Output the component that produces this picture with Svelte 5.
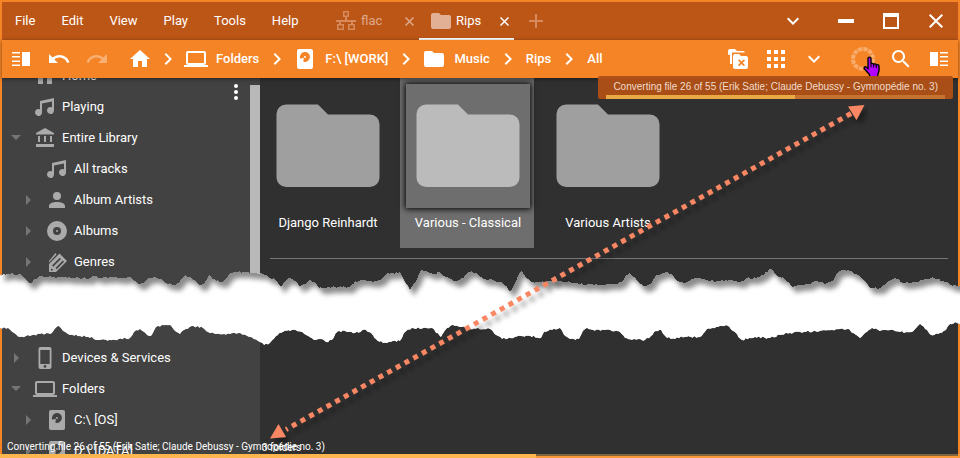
<script>
  const menus = ['File', 'Edit', 'View', 'Play', 'Tools', 'Help'];

  const icons = {
    home: 'M10 20v-6h4v6h5v-8h3L12 3 2 12h3v8z',
    undo: 'M12.5 8c-2.65 0-5.05.99-6.9 2.6L2 7v9h9l-3.62-3.62c1.39-1.16 3.16-1.88 5.12-1.88 3.54 0 6.55 2.31 7.6 5.5l2.37-.78C21.08 11.03 17.15 8 12.5 8z',
    redo: 'M18.4 10.6C16.55 8.99 14.15 8 11.5 8c-4.65 0-8.58 3.03-9.96 7.22L3.9 16c1.05-3.19 4.05-5.5 7.6-5.5 1.95 0 3.73.72 5.12 1.88L13 16h9V7l-3.6 3.6z',
    laptop: 'M20 18c1.1 0 2-.9 2-2V6c0-1.1-.9-2-2-2H4c-1.1 0-2 .9-2 2v10c0 1.1.9 2 2 2H0v2h24v-2zM4 6h16v10H4z',
    drive: 'M6 2h12a2 2 0 0 1 2 2v16a2 2 0 0 1-2 2H6a2 2 0 0 1-2-2V4a2 2 0 0 1 2-2zM10.800 10.800L7.300 11.800A5 5 0 1 1 10.400 14.700zM12 9a1 1 0 1 0 0 2 1 1 0 0 0 0-2z',
    folder: 'M10 4H4c-1.110 0-2 .89-2 2v12a2 2 0 0 0 2 2h16a2 2 0 0 0 2-2V8c0-1.110-.9-2-2-2h-8z',
    music: 'M21 3v12.500a3.500 3.500 0 1 1-2-3.160V6.470L9 8.600v8.900A3.500 3.500 0 1 1 7 14.340V6z',
    library: 'M3 8.500V7l9-5 9 5v1.500zM5 10h2v6H5zM11 10h2v6h-2zM17 10h2v6h-2zM3 18h18v3H3z',
    person: 'M12 4a4 4 0 1 1 0 8 4 4 0 0 1 0-8zM4 20v-2c0-2.660 4-4 8-4s8 1.340 8 4v2z',
    disc: 'M12 2a10 10 0 1 0 0 20 10 10 0 0 0 0-20zm0 6a4 4 0 1 1 0 8 4 4 0 0 1 0-8zm0 3a1 1 0 1 0 0 2 1 1 0 0 0 0-2z',
    genres: 'M4 22V14L14.500 3.500 22 11 11 22zM5.800 19.800a1 1 0 1 0 2 0 1 1 0 0 0-2 0zM7 15.500l1.200 1.200L16 9l-1.200-1.200zM10.500 18l1.200 1.200 7.300-7.500-1.200-1.200zM4 11L10.500 3l1 1.500L4 12.500z',
    phone: 'M7.500 1h9A2 2 0 0 1 18.500 3v18a2 2 0 0 1-2 2h-9a2 2 0 0 1-2-2V3a2 2 0 0 1 2-2zM7.300 4v14h9.400V4zM12 19a1.400 1.400 0 1 0 0 2.800 1.400 1.400 0 0 0 0-2.800z',
    chevron: 'M8.590 16.580L13.170 12 8.590 7.410 10 6l6 6-6 6z',
    down: 'M7.410 8.590L12 13.170l4.590-4.580L18 10l-6 6-6-6z',
    search: 'M9.500 3A6.500 6.500 0 0 1 14.440 13.730l.27.27h.79l5 5-1.500 1.500-5-5v-.79l-.27-.27A6.500 6.500 0 1 1 9.500 3zm0 2a4.500 4.500 0 1 0 0 9 4.500 4.500 0 0 0 0-9z',
    grid: 'M3 3h4v4H3zM10 3h4v4h-4zM17 3h4v4h-4zM3 10h4v4H3zM10 10h4v4h-4zM17 10h4v4h-4zM3 17h4v4H3zM10 17h4v4h-4zM17 17h4v4h-4z',
    panelLeft: 'M3 5h8v1.500H3zM3 9h8v1.500H3zM3 13.500h8V15H3zM3 17.500h8V19H3zM13 5h8v14h-8z',
    panelRight: 'M3 5h8v14H3zM13 5h8v1.500h-8zM13 9h8v1.500h-8zM13 13.500h8V15h-8zM13 17.500h8V19h-8z',
    network: 'M9 2h6v6h-2v3h9v2h-3v2h2v6h-7v-6h3v-2H7v2h3v6H3v-6h2v-2H2v-2h9V8H9zM10.500 3.500v3h3v-3zM4.500 16.500v3h4v-3zM15.500 16.500v3h4v-3z',
    closeFolder: 'M4 2h5l2 2h6a2 2 0 0 1 2 1.500H6V17H4V8L2 7.500V4a2 2 0 0 1 2-2zM9 7h4l2 2h5a2 2 0 0 1 2 2v9a2 2 0 0 1-2 2H9a2 2 0 0 1-2-2V9a2 2 0 0 1 2-2zM13.200 12.200L12 13.400l2.300 2.300L12 18l1.200 1.200 2.300-2.300 2.300 2.300L19 18l-2.300-2.300 2.300-2.300-1.200-1.200-2.300 2.300z'
  };

  const crumbs = [
    { label: '', icon: 'home' },
    { label: 'Folders', icon: 'laptop' },
    { label: 'F:\\ [WORK]', icon: 'drive' },
    { label: 'Music', icon: 'folder' },
    { label: 'Rips', icon: '' },
    { label: 'All', icon: '' }
  ];

  const library = [
    { label: 'Home', icon: 'home', level: 0 },
    { label: 'Playing', icon: 'music', level: 0 },
    { label: 'Entire Library', icon: 'library', level: 0, caret: 'open' },
    { label: 'All tracks', icon: 'music', level: 1 },
    { label: 'Album Artists', icon: 'person', level: 1, caret: 'closed' },
    { label: 'Albums', icon: 'disc', level: 1, caret: 'closed' },
    { label: 'Genres', icon: 'genres', level: 1, caret: 'closed' }
  ];
  const places = [
    { label: 'Devices & Services', icon: 'phone', level: 0, caret: 'closed' },
    { label: 'Folders', icon: 'laptop', level: 0, caret: 'open' },
    { label: 'C:\\ [OS]', icon: 'drive', level: 1, caret: 'closed' },
    { label: 'D:\\ [DATA]', icon: 'drive', level: 1, caret: 'closed' }
  ];

  const albums = [
    { name: 'Django Reinhardt' },
    { name: 'Various - Classical', selected: true },
    { name: 'Various Artists' }
  ];

  const message = 'Converting file 26 of 55 (Erik Satie; Claude Debussy - Gymnopédie no. 3)';

  // Outline of the torn strip, as x,y pairs measured from the strip's top.
  const upper = '0,10 7,9 12,8 15,10 20,9 23,12 28,17 32,18 35,14 41,11 48,12 60,12 75,13 90,13 95,11 100,13 110,12 120,13 130,12 137,18 143,18 148,13 155,12 163,15 168,19 173,20 178,18 184,11 189,12 194,15 200,20 204,19 209,10 214,14 220,17 224,16 229,9 234,7 245,7 256,8 263,9 270,13 275,14 281,22 285,16 290,13 296,16 300,22 304,19 309,15 314,17 319,23 332,22 342,22 350,22 355,16 365,15 375,16 380,15 386,9 393,8 400,7 403,13 410,25 416,16 421,5 428,7 433,9 440,7 446,12 454,16 460,15 467,9 472,6 478,10 485,14 495,16 503,18 510,26 513,22 518,11 521,6 525,11 532,17 540,17 550,16 560,16 570,17 580,19 600,20 610,19 622,17 626,10 630,8 634,12 640,19 645,21 651,19 656,10 661,9 666,7 672,9 676,15 684,18 693,14 700,13 710,16 720,16 730,15 740,17 747,13 756,13 764,10 769,4 773,5 777,11 785,14 793,22 800,20 810,19 817,16 825,19 833,16 837,8 843,5 850,6 859,10 864,15 870,23 880,23 887,17 895,13 903,18 915,17 925,14 934,13 943,16 951,20 960,21';
  const lower = '0,63 8,63 14,68 20,72 30,71 40,69 50,69 54,65 59,61 63,66 70,70 80,71 88,72 100,75 115,75 130,73 134,67 140,64 147,70 151,71 156,62 162,60 170,60 174,65 180,69 186,64 192,61 203,63 208,67 216,69 230,69 240,68 250,72 258,76 264,80 270,78 276,71 283,67 292,65 302,67 308,71 314,75 320,74 326,77 332,75 337,67 345,66 355,68 366,65 371,68 376,74 383,78 393,76 400,76 404,68 412,63 432,63 436,68 441,72 447,63 453,60 462,62 470,64 490,64 496,70 502,74 515,72 530,71 541,73 544,67 552,65 560,63 564,70 570,74 579,74 583,66 587,63 593,65 610,65 620,67 625,73 632,75 640,74 645,75 651,71 656,66 661,65 665,71 671,74 685,72 700,72 707,64 718,62 728,61 733,66 742,75 755,72 770,73 780,70 790,68 800,67 820,66 848,64 853,68 860,73 867,67 872,63 878,65 890,65 900,67 912,67 917,62 920,59 925,64 931,70 940,68 946,65 950,59 957,58 960,59';

  // Breaks each straight run into short steps so that the paper looks fibrous.
  function roughen(source) {
    const pts = source.split(' ').map((p) => p.split(',').map(Number));
    const out = [];
    let seed = 7;
    for (let i = 0; i < pts.length - 1; i++) {
      const [x1, y1] = pts[i];
      const [x2, y2] = pts[i + 1];
      const steps = Math.max(1, Math.round((x2 - x1) / 2));
      for (let s = 0; s < steps; s++) {
        seed = (seed * 1103 + 541) % 7919;
        const jitter = s === 0 ? 0 : (seed / 7919 - 0.5) * 2;
        out.push([x1 + ((x2 - x1) * s) / steps, y1 + ((y2 - y1) * s) / steps + jitter]);
      }
    }
    out.push(pts[pts.length - 1]);
    return out;
  }
  const top = roughen(upper);
  const bottom = roughen(lower).reverse();
  const tear = [...top, ...bottom].map((p) => p.join(',')).join(' ');
  const paper = [[-30, 0], [2, 0], ...top, [1000, 21], [1000, 120], [-30, 120]].map((p) => p.join(',')).join(' ');
</script>

{#snippet icon(name)}
  <svg class="icon" viewBox="0 0 24 24" aria-hidden="true"><path fill-rule="evenodd" d={icons[name]} /></svg>
{/snippet}

{#snippet tree(rows)}
  <ul>
    {#each rows as row}
      <li>
        <a href="#item" class:nested={row.level === 1}>
          <span class="caret">
            {#if row.caret === 'open'}
              <svg width="10" height="5" viewBox="0 0 10 5"><path d="M0 0h10L5 5z" /></svg>
            {:else if row.caret === 'closed'}
              <svg width="5" height="10" viewBox="0 0 5 10"><path d="M0 0v10l5-5z" /></svg>
            {/if}
          </span>
          {@render icon(row.icon)}
          <span>{row.label}</span>
        </a>
      </li>
    {/each}
  </ul>
{/snippet}

<div class="app">
  <header class="titlebar">
    <nav class="menus">
      {#each menus as m}<button>{m}</button>{/each}
    </nav>
    <div class="tabs">
      <div class="tab">
        {@render icon('network')}
        <a href="#flac">flac</a>
        <button class="close" aria-label="Close flac"><svg width="9" height="9" viewBox="0 0 9 9"><path d="M.5.5l8 8M8.500.5l-8 8" /></svg></button>
      </div>
      <div class="tab active">
        {@render icon('folder')}
        <a href="#rips">Rips</a>
        <button class="close" aria-label="Close Rips"><svg width="9" height="9" viewBox="0 0 9 9"><path d="M.5.5l8 8M8.500.5l-8 8" /></svg></button>
      </div>
      <button class="add" aria-label="New tab"><svg width="14" height="14" viewBox="0 0 14 14"><path d="M7 0v14M0 7h14" /></svg></button>
    </div>
    <div class="window">
      <button aria-label="More tabs">{@render icon('down')}</button>
      <button aria-label="Minimize"><svg width="16" height="16" viewBox="0 0 16 16"><path d="M0 6h16v4H0z" /></svg></button>
      <button aria-label="Maximize"><svg width="16" height="16" viewBox="0 0 16 16"><path fill-rule="evenodd" d="M0 0h16v16H0zM2 4v10h12V4z" /></svg></button>
      <button aria-label="Close"><svg width="14" height="14" viewBox="0 0 14 14"><path d="M.7.7l12.600 12.600M13.300.7L.7 13.300" fill="none" stroke="#fff" stroke-width="2" /></svg></button>
    </div>
  </header>

  <div class="toolbar">
    <div class="history">
      <button aria-label="Toggle navigation panel">{@render icon('panelLeft')}</button>
      <button aria-label="Back">{@render icon('undo')}</button>
      <button aria-label="Forward" class="off">{@render icon('redo')}</button>
    </div>
    <nav class="crumbs" aria-label="Breadcrumb">
      {#each crumbs as c, i}
        {#if i > 0}{@render icon('chevron')}{/if}
        <a href="#crumb" aria-label={c.label || 'Home'}>
          {#if c.icon}{@render icon(c.icon)}{/if}
          {#if c.label}<span>{c.label}</span>{/if}
        </a>
      {/each}
    </nav>
    <div class="tools">
      <button aria-label="Close folder">{@render icon('closeFolder')}</button>
      <button aria-label="Grid view">{@render icon('grid')}</button>
      <button aria-label="View options">{@render icon('down')}</button>
      <button aria-label="Running tasks" class="task">
        <svg width="24" height="24" viewBox="0 0 24 24"><circle cx="12" cy="12" r="10" fill="none" stroke="#fff" stroke-opacity=".32" stroke-width="4" stroke-dasharray="4.240 1" /></svg>
        <svg class="cursor" width="18" height="23" viewBox="0 0 18 23">
          <path d="M5 2.500C5 .6 8 .6 8 2.500V8c.5-1 2.500-.8 2.700.4.600-.9 2.400-.6 2.600.6.600-.7 2.700-.4 2.700 1.200v4.300c0 1.500-1 2.500-1.200 4V21H6.500v-2.500L1.500 13c-1-1.300.3-2.800 1.700-2l1.800 1.500z" fill="#b400ff" stroke="#000" stroke-width="1.400" />
          <path d="M10.700 8.500v3M13.300 9.500v2.500M8 8v3.500" stroke="#000" fill="none" />
        </svg>
      </button>
      <button aria-label="Search">{@render icon('search')}</button>
      <button aria-label="Toggle details panel">{@render icon('panelRight')}</button>
    </div>
    <div class="toast" role="status">
      <span>{message}</span>
      <div class="meter"><div style:width="{(189 / 339) * 100}%"></div></div>
    </div>
  </div>

  <div class="body">
    <aside>
      {@render tree(library)}
      {@render tree(places)}
      <button class="kebab" aria-label="Panel options"><svg width="4" height="16" viewBox="0 0 4 16"><circle cx="2" cy="2" r="2" /><circle cx="2" cy="8" r="2" /><circle cx="2" cy="14" r="2" /></svg></button>
      <div class="scrollbar"></div>
    </aside>
    <main>
      <div class="gallery">
        {#each albums as a}
          <a href="#album" class="card" class:selected={a.selected}>
            <span class="thumb">
              <svg width="104" height="84" viewBox="0 0 104 84"><path d="M10 .5H42L52 10.500H94A9.500 9.500 0 0 1 103.500 20V73A9.500 9.500 0 0 1 94 83H10A9.500 9.500 0 0 1 .5 73V10A9.500 9.500 0 0 1 10 .5z" /></svg>
            </span>
            <span class="name">{a.name}</span>
          </a>
        {/each}
      </div>
      <hr />
    </main>

    <svg class="tear" viewBox="0 0 960 82" preserveAspectRatio="none" aria-hidden="true">
      <defs>
        <clipPath id="strip"><polygon points={tear} /></clipPath>
        <filter id="soft" x="-5%" y="-20%" width="110%" height="140%"><feGaussianBlur stdDeviation="2.400" /></filter>
      </defs>
      <polygon points={tear} fill="#8c8c8c" shape-rendering="crispEdges" />
      <g clip-path="url(#strip)"><polygon points={paper} fill="#fff" filter="url(#soft)" transform="translate(4 6)" /></g>
    </svg>
    <svg class="arrow" viewBox="0 0 600 340" aria-hidden="true">
      <defs>
        <filter id="shade" x="-5%" y="-5%" width="110%" height="115%"><feDropShadow dx="4" dy="5" stdDeviation="2.500" flood-color="#000" flood-opacity=".4" /></filter>
      </defs>
      <g filter="url(#shade)" fill="#fa8763">
        <path d="M582 10.500L17 326.500" stroke="#fa8763" stroke-width="5" stroke-dasharray="5 4.930" />
        <path d="M595.500 2L579 3.500 587.500 17zM1 335.500L9.500 321 17 334z" />
      </g>
    </svg>
  </div>

  <footer>
    <span class="count">3 folders</span>
    <span class="message">{message}</span>
    <div class="progress"><div style:width="{(536 / 960) * 100}%"></div></div>
  </footer>
</div>

<style>
  :global(body) {
    margin: 0;
    background: #303030;
  }
  .app {
    position: relative;
    display: flex;
    flex-direction: column;
    height: 100vh;
    box-sizing: border-box;
    border: 2px solid #f58426;
    color: #fff;
    font: 13px/18px Roboto, 'Liberation Sans', sans-serif;
  }
  button {
    padding: 0;
    border: 0;
    background: none;
    color: inherit;
    font: inherit;
  }
  a {
    color: inherit;
    text-decoration: none;
  }
  svg {
    display: block;
    flex: none;
    fill: currentColor;
  }
  .icon {
    width: 24px;
    height: 24px;
  }

  .titlebar {
    display: flex;
    flex: none;
    height: 38px;
    background: #bc5617;
  }
  .menus {
    display: flex;
    gap: 26px;
    width: 309px;
    padding-left: 13px;
    box-sizing: border-box;
  }
  .tabs {
    display: flex;
    flex: 1;
    padding-left: 13px;
  }
  .tab {
    display: flex;
    align-items: center;
    gap: 3px;
    width: 95px;
    padding: 0 4px 0 10px;
    box-sizing: border-box;
    color: #dda98a;
  }
  .tab a {
    flex: 1;
  }
  .tab .icon {
    color: #d68a5d;
  }
  .tab.active {
    color: #fff;
    box-shadow: inset 0 -2px #fff;
  }
  .tab.active .icon {
    color: #e2b094;
  }
  .close {
    display: flex;
    justify-content: center;
    width: 12px;
  }
  .close svg,
  .add svg {
    fill: none;
    stroke: currentColor;
    stroke-width: 1.500;
  }
  .add {
    width: 44px;
    display: flex;
    align-items: center;
    justify-content: center;
    color: #d68a5d;
  }
  .add svg {
    stroke-width: 2;
  }
  .window {
    display: flex;
  }
  .window button {
    display: flex;
    align-items: center;
    justify-content: center;
    width: 45px;
  }
  .window button:first-child {
    width: 60px;
  }

  .toolbar {
    position: relative;
    z-index: 2;
    display: flex;
    align-items: center;
    flex: none;
    height: 38px;
    padding: 0 7px;
    background: #f58426;
    box-shadow: 0 1px 4px rgba(0, 0, 0, 0.5);
  }
  .history {
    display: flex;
    gap: 14px;
    margin-right: 15px;
  }
  .off {
    opacity: 0.35;
  }
  .crumbs {
    display: flex;
    align-items: center;
    flex: 1;
    font-weight: 500;
  }
  .crumbs a {
    display: flex;
    align-items: center;
    gap: 6px;
    padding: 0 4px;
  }
  .crumbs span {
    padding: 0 2px;
  }
  .tools {
    display: flex;
    gap: 14px;
  }
  .task {
    position: relative;
    margin: 0 0 0 11px;
  }
  .cursor {
    position: absolute;
    left: 12px;
    top: 9px;
  }
  .toast {
    position: absolute;
    right: 5px;
    top: 36px;
    padding: 3px 8px 0;
    border-radius: 2px;
    background: rgba(172, 80, 22, 0.97);
    color: #f2dccd;
    font-family: 'Liberation Sans', sans-serif;
    font-size: 10px;
    line-height: 16px;
  }
  .toast span {
    padding: 0 7px;
  }
  .meter {
    height: 4px;
    background: #c6732f;
  }
  .meter div {
    height: 4px;
    background: #eba946;
  }

  .body {
    position: relative;
    display: flex;
    flex: 1;
    min-height: 0;
    background: #303030;
  }
  aside {
    position: relative;
    flex: none;
    width: 258px;
    overflow: hidden;
    background: #424242;
  }
  ul {
    margin: -18px 0 65px;
    padding: 0;
    list-style: none;
  }
  ul + ul {
    margin: 0;
  }
  aside a {
    display: flex;
    align-items: center;
    height: 31px;
    padding-left: 6px;
  }
  aside a.nested {
    padding-left: 18px;
  }
  .caret {
    display: flex;
    justify-content: center;
    width: 16px;
    margin-right: 9px;
    color: #757575;
  }
  aside .icon {
    margin-right: 5px;
    color: #aaa;
  }
  .kebab {
    position: absolute;
    right: 22px;
    top: 6px;
  }
  .scrollbar {
    position: absolute;
    right: 0;
    top: 7px;
    width: 10px;
    height: 220px;
    background: #b8b8b8;
  }
  main {
    flex: 1;
    min-width: 0;
  }
  .gallery {
    display: flex;
    gap: 6px;
  }
  .card {
    display: flex;
    flex-direction: column;
    align-items: center;
    width: 132px;
    padding: 6px 0 10px 2px;
    color: #fff;
  }
  .thumb {
    display: flex;
    align-items: center;
    justify-content: center;
    width: 124px;
    height: 124px;
    color: #9f9f9f;
  }
  .name {
    line-height: 30px;
  }
  .selected {
    background: #6e6e6e;
  }
  .selected .thumb {
    color: #bbb;
    box-shadow: 0 0 6px 1px #000;
  }
  hr {
    height: 1px;
    margin: 10px 10px 0;
    border: 0;
    background: #777;
  }

  .tear {
    position: absolute;
    z-index: 1;
    left: -2px;
    top: 187px;
    width: calc(100% + 4px);
    height: 82px;
  }
  .arrow {
    position: absolute;
    z-index: 1;
    left: 267px;
    top: 25px;
    width: 600px;
    height: 340px;
  }

  footer {
    position: relative;
    z-index: 2;
    height: 0;
    font-size: 10px;
    line-height: 16px;
    white-space: nowrap;
  }
  .count,
  .message {
    position: absolute;
    bottom: 1px;
    left: 5px;
  }
  .count {
    left: 260px;
    bottom: 0;
  }
  .progress {
    position: absolute;
    left: -2px;
    right: -2px;
    bottom: -2px;
    height: 4px;
    background: rgba(253, 182, 79, 0.4);
  }
  .progress div {
    height: 4px;
    background: #fdb64f;
  }
</style>
